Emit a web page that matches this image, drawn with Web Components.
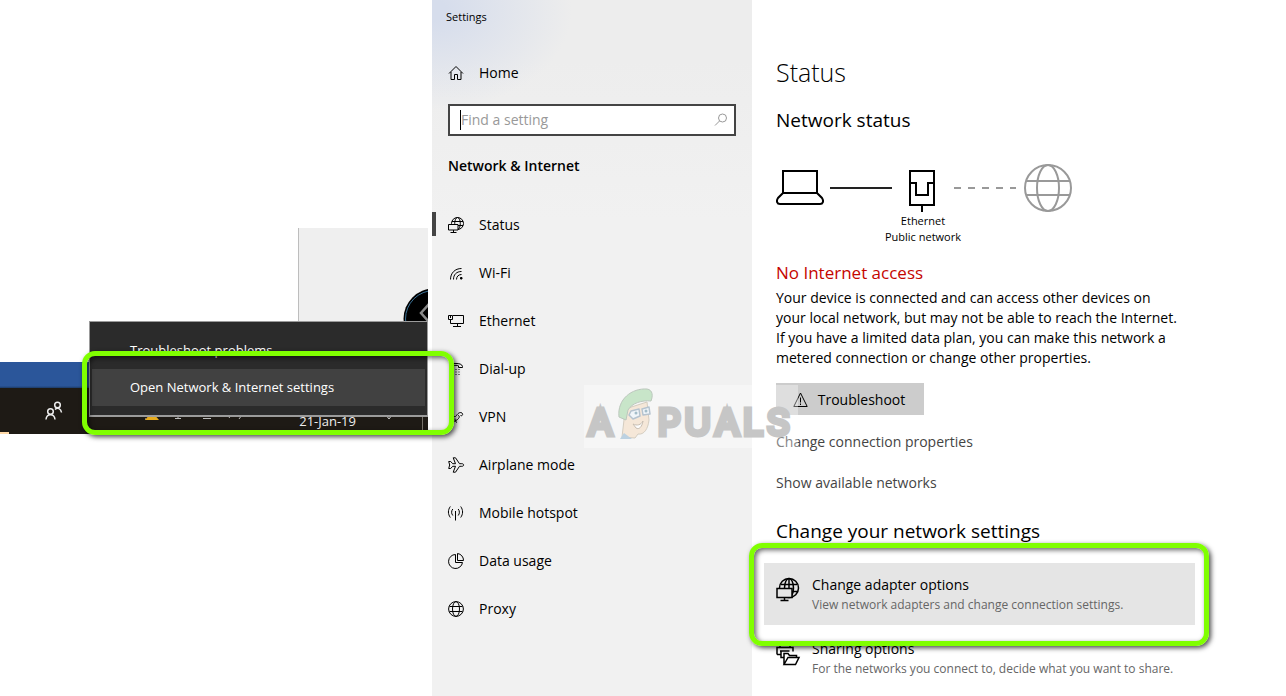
<!DOCTYPE html>
<html lang="en">
<head>
<meta charset="utf-8">
<title>Settings</title>
<style>
  body { margin: 0; background: #fff; color: #000; font-family: "Open Sans", "Noto Sans", sans-serif; font-size: 14px; line-height: 20px; }
</style>
</head>
<body>
<settings-app></settings-app>
<script>
const define = (name, html, setup) => customElements.define(name, class extends HTMLElement {
  constructor() {
    super();
    const t = document.createElement('template');
    t.innerHTML = html;
    this.attachShadow({ mode: 'open' }).append(t.content.cloneNode(true));
  }
  connectedCallback() { if (setup) setup(this, this.shadowRoot); }
});

const ICONS = {
  home: [16, '<path d="M1 8.500 8 1.500l7 7M3 7v7.500h3.500V9.500h3v5H13V7"/>'],
  status: [16, '<circle cx="9.500" cy="6.500" r="6"/><ellipse cx="9.500" cy="6.500" rx="2.800" ry="6"/><path d="M4 4.500h11M4 8.500h11"/><path d="M.5 7.500h9.500v5.500H.5z" fill="#f1f1f1"/><path d="M5.500 13v2.500M2.500 15.500h6"/>'],
  wifi: [16, '<path d="M2.500 14.500C2.500 8 7 3.500 13.500 3.500M5.500 14.500c0-5 3-8 8-8M8.500 14.500c0-3 2-5 5-5"/><path d="M12.500 12.500h1.500v1.500h-1.500z" fill="currentColor"/>'],
  ethernet: [16, '<path d="M5 2.500h10.500v8H3.500M9.500 10.500v3M5 13.500h8M.5 2.500h4v4H.5zM2.500 6.500v4h2M2.500 3v2"/>'],
  dialup: [16, '<path d="M1.500 6.500v-1C2 3 5 2.500 8 2.500s6 .5 6.500 3v1h-4v-1.700C9 4.200 7 4.200 5.500 4.800v1.700z"/><path d="M4 8.500h1m2.500 0h1m2 0h1M4 11h1m2.500 0h1m2 0h1M4 13.500h1m2.500 0h1m2 0h1"/>'],
  vpn: [16, '<path d="M1 5c2-2 3 0 4 1.500s2.500 1.500 3.500 0S11.500 2.500 14 4c1.500 1.500 0 3.500-1.500 2.500M10 6.500c2 0 1.500 2.500-.5 4s-4 2.500-6 1.500c-1.500-1.500 0-3 1.500-2M7 9.500c0 2 .5 3.500 2 4M5 7.500l-2 2"/>'],
  plane: [16, '<path d="M.7 4.500h2l2 2.200h2.800L5.200.8h2.300l4 5.900h2.300c2.500 0 2.500 2.600 0 2.600h-2.300l-4 5.900H5.200l2.300-5.900H4.700l-2 2.200h-2L1.700 8z"/>'],
  hotspot: [16, '<path d="M7.500 6v9.500M4.800 4c-1.600 2-1.600 4.500 0 6.500M2.300 1.500C-.2 5-.2 9 2.300 12.500M10.200 4c1.600 2 1.600 4.500 0 6.500M12.700 1.500c2.500 3.500 2.500 7.500 0 11"/>'],
  usage: [16, '<path d="M7.500 1.500A7 7 0 1 0 14.500 9.500H7.500z"/><path d="M9.500.5v7h6A6.800 6.800 0 0 0 9.500.5z"/>'],
  globe: [16, '<circle cx="8" cy="8" r="7.400"/><ellipse cx="8" cy="8" rx="3.500" ry="7.400"/><path d="M1.500 5.500h13M1.500 10.500h13"/>'],
  search: [14, '<circle cx="8.500" cy="5" r="4"/><path d="M5.500 8 1 12.500"/>'],
  warning: [16, '<path d="M7.500 1 .8 14.500h13.400zM7.500 5.500v5M7.500 11.500v1.500"/>'],
  people: [20, '<g stroke-width="1.500"><circle cx="12.500" cy="4" r="2.800"/><path d="M10 8.500c2.500-2.500 6-1 6.500 3"/><circle cx="5.500" cy="10.500" r="2.800"/><path d="M1 18.500c.5-6.500 8.500-6.500 9 0"/></g>'],
  adapter: [24, '<g stroke-width="1.500"><circle cx="13" cy="10" r="9.500"/><ellipse cx="13" cy="10" rx="4.500" ry="9.500"/><path d="M13 .5v19M5 6.500h16M5 13.500h17"/><path d="M1 10.500h15v9H1z" fill="#e5e5e5"/><path d="M8.500 19.500v3M4.500 22.500h8"/></g>'],
  sharing: [24, '<g stroke-width="1.500"><path d="M4 6V1h10v5M1 12.500V5.500h16v4M1 12.500h4M4 9h9.500M5 9v6.500h2.500M8 22.500V11.500h4l1.500 2h7v2.500M8 22.500l4-7h11l-3.500 7z"/></g>'],
};

define('ui-icon', `<style>
  :host { display: inline-flex; flex: none; }
  svg { display: block; fill: none; stroke: currentColor; stroke-width: 1; overflow: visible; }
</style>`, (el, root) => {
  const [size, body] = ICONS[el.getAttribute('name')];
  const t = document.createElement('template');
  t.innerHTML = `<svg width="${size}" height="${size}" viewBox="0 0 ${size} ${size}" aria-hidden="true">${body}</svg>`;
  root.append(t.content);
});

/* Rounded marker frame drawn over the thing it points out. */
define('highlight-ring', `<style>
  :host { display: block; position: absolute; z-index: 5; box-sizing: border-box; border: 5px solid #80ff00; border-radius: 13px;
    box-shadow: 2px 2px 5px rgba(0,0,0,.7), inset 2px 2px 5px rgba(0,0,0,.6); pointer-events: none; }
</style>`);

define('context-menu', `<style>
  :host { display: block; box-sizing: border-box; background: #2b2b2b; border: solid #9b9b9b; border-width: 1px 1px 2px; padding: 10px 2px 9px; }
</style><div role="menu"><slot></slot></div>`);

define('menu-entry', `<style>
  :host { display: block; }
  button { display: block; width: 100%; height: 37px; border: 0; padding: 0 0 2px 38px; text-align: left; background: none; color: #fff; font: 13px/18px "Open Sans", "Noto Sans", sans-serif; }
  :host([active]) button { background: #414141; }
</style><button role="menuitem"><slot></slot></button>`);

define('desktop-pane', `<style>
  :host { display: block; position: relative; padding: 228px 4px 0 0; }
  .preview { display: flex; justify-content: flex-end; box-sizing: border-box; width: 130px; height: 134px; margin-left: auto; padding-top: 60px; border-left: 1px solid #bdbdbd; background: #efefef; overflow: hidden; }
  .preview svg { flex: none; width: 25px; height: 62px; }
  .strip { height: 26px; background: linear-gradient(#2b569a 92%, #1c3a66); }
  .taskbar { display: flex; align-items: flex-end; justify-content: flex-end; box-sizing: border-box; height: 46px; padding-bottom: 4px; background: #1e1a15; color: #eee; position: relative; }
  .taskbar::before { content: ""; position: absolute; left: 0; bottom: 0; width: 9px; height: 2px; background: #ffd9a8; }
  .people { margin-bottom: 9px; margin-right: 80px; }
  .tray { width: 110px; height: 17px; margin-right: 44px; }
  time { font-size: 13px; line-height: 18px; }
  .down { width: 10px; height: 18px; margin: 0 28px; }
  .edge { width: 1px; height: 42px; background: #77726b; margin-right: 5px; }
  context-menu { position: absolute; right: 4px; top: 321px; width: 339px; }
  highlight-ring { right: -22px; top: 351px; width: 372px; height: 84px; }
</style>
<div class="preview"><svg viewBox="0 0 25 62"><circle cx="31" cy="31" r="30.500" fill="#000"/><circle cx="31" cy="31" r="28.500" fill="none" stroke="#3b7196"/><path d="M26 16 18 25l8 9" fill="none" stroke="#8b8b8b" stroke-width="2.500"/></svg></div>
<div class="strip"></div>
<div class="taskbar">
  <ui-icon class="people" name="people"></ui-icon>
  <svg class="tray" viewBox="0 0 110 17"><path d="M0 5v2M3 5v2" stroke="#ccc"/><path d="M6 0 0 7h14l-6-7z" fill="#e7ab1d"/><path d="M33 0v6M30 5.500h6M58 5.500h8M84 5l2-3M94 6l3-4" stroke="#bbb" fill="none"/></svg>
  <time datetime="2019-01-21">21-Jan-19</time>
  <svg class="down" viewBox="0 0 10 18"><path d="m2 3 3 4 3-4" fill="none" stroke="#ccc"/></svg>
  <span class="edge"></span>
</div>
<context-menu>
  <menu-entry>Troubleshoot problems</menu-entry>
  <menu-entry active>Open Network &amp; Internet settings</menu-entry>
</context-menu>
<highlight-ring></highlight-ring>`);

define('nav-item', `<style>
  :host { display: block; }
  a { display: flex; align-items: center; gap: 15px; height: 48px; padding-left: 16px; color: #000; text-decoration: none; position: relative; }
  :host([current]) a::before { content: ""; position: absolute; left: 0; top: 11px; width: 4px; height: 24px; background: #444; }
</style><a href="#"><span><slot></slot></span></a>`, (el, root) => {
  const icon = document.createElement('ui-icon');
  icon.setAttribute('name', el.getAttribute('icon'));
  root.querySelector('a').prepend(icon);
});

define('search-box', `<style>
  :host { display: flex; align-items: center; box-sizing: border-box; height: 32px; border: 2px solid #444; background: #fff; padding: 0 6px 0 10px; color: #999; }
  .caret { width: 1px; height: 20px; background: #000; }
  input { flex: 1; min-width: 0; border: 0; outline: 0; padding: 0; background: none; font: 14px/20px "Open Sans", "Noto Sans", sans-serif; }
  input::placeholder { color: #999; opacity: 1; }
</style><span class="caret"></span><input type="text" placeholder="Find a setting" aria-label="Find a setting"><ui-icon name="search"></ui-icon>`);

define('settings-sidebar', `<style>
  :host { display: block; background: radial-gradient(ellipse 140px 100px at 0 10px, #d6ddec 10%, rgba(214,221,236,0)), linear-gradient(#ededed 60px, #f1f1f1 220px); }
  header { padding: 8px 14px; font-size: 11px; line-height: 18px; }
  .home { margin-top: 15px; }
  search-box { margin: 7px 16px 0; }
  h2 { margin: 16px 16px 21px; font-size: 14px; line-height: 28px; font-weight: 600; }
</style>
<header>Settings</header>
<nav-item class="home" icon="home">Home</nav-item>
<search-box></search-box>
<h2>Network &amp; Internet</h2>
<nav>
  <nav-item icon="status" current>Status</nav-item>
  <nav-item icon="wifi">Wi-Fi</nav-item>
  <nav-item icon="ethernet">Ethernet</nav-item>
  <nav-item icon="dialup">Dial-up</nav-item>
  <nav-item icon="vpn">VPN</nav-item>
  <nav-item icon="plane">Airplane mode</nav-item>
  <nav-item icon="hotspot">Mobile hotspot</nav-item>
  <nav-item icon="usage">Data usage</nav-item>
  <nav-item icon="globe">Proxy</nav-item>
</nav>`);

define('network-map', `<style>
  :host { display: block; width: 296px; }
  .row { display: flex; align-items: center; height: 48px; }
  svg { flex: none; fill: none; stroke: #000; stroke-width: 2; }
  .line { width: 62px; height: 2px; margin-left: 6px; background: #222; }
  .dash { width: 62px; height: 2px; margin-right: 8px; background: repeating-linear-gradient(90deg, #999 0 7px, transparent 7px 14px); }
  p { margin: 1px 2px 0 0; text-align: center; font-size: 11px; line-height: 16px; }
</style>
<div class="row">
  <svg width="48" height="48"><path d="M7 7h34v22H7zM7 29l-5 5c-2 3-1 6 2 6h40c3 0 4-3 2-6l-5-5"/></svg>
  <span class="line"></span>
  <svg width="62" height="48"><path d="M18 7h24v34H18zM18 19h6v12h12V19h6M30 41v7"/></svg>
  <span class="dash"></span>
  <svg width="48" height="48" style="stroke:#999"><circle cx="24" cy="24" r="23"/><ellipse cx="24" cy="24" rx="11" ry="23"/><path d="M2 17h44M2 31h44"/></svg>
</div>
<p><slot></slot></p>`);

define('option-row', `<style>
  :host { display: block; position: relative; margin: 0 -12px 2px; }
  a { display: flex; gap: 12px; height: 38px; padding: 12px; color: #000; text-decoration: none; }
  :host([hovered]) a { background: #e5e5e5; }
  .icon { margin-top: 3px; }
  .text { white-space: nowrap; }
  .hint { display: block; font-size: 12px; line-height: 20px; color: #666; }
</style><a href="#"><span class="icon"></span><span class="text"><slot></slot><span class="hint"></span></span></a><slot name="marker"></slot>`, (el, root) => {
  const icon = document.createElement('ui-icon');
  icon.setAttribute('name', el.getAttribute('icon'));
  root.querySelector('.icon').replaceChildren(icon);
  root.querySelector('.hint').textContent = el.getAttribute('hint');
});

define('status-page', `<style>
  :host { display: block; padding: 56px 24px 5px; }
  .column { max-width: 407px; }
  h1, h2, h3, p { margin: 0; font-weight: 400; }
  h1 { font-size: 25px; line-height: 32px; font-weight: 300; }
  h2 { font-size: 19px; line-height: 28px; }
  .first { margin: 18px 0 30px; }
  h3 { margin: 16px 0 3px; font-size: 17px; line-height: 24px; color: #c50500; }
  button { display: flex; align-items: center; justify-content: center; gap: 9px; width: 148px; height: 32px; margin: 15px 0 17px; padding: 1px 6px 0 4px; border: 0; background: #ccc; color: #000; font: 14px/20px "Open Sans", "Noto Sans", sans-serif; }
  .link { display: block; width: max-content; margin-bottom: 21px; color: #444; text-decoration: none; }
  .settings { margin: 24px 0 18px; }
  highlight-ring { inset: -20px -14px -21px -15px; }
</style>
<div class="column">
  <h1>Status</h1>
  <h2 class="first">Network status</h2>
  <network-map>Ethernet<br>Public network</network-map>
  <h3>No Internet access</h3>
  <p>Your device is connected and can access other devices on<br>your local network, but may not be able to reach the Internet.<br>If you have a limited data plan, you can make this network a<br>metered connection or change other properties.</p>
  <button><ui-icon name="warning"></ui-icon>Troubleshoot</button>
  <a class="link" href="#">Change connection properties</a>
  <a class="link" href="#">Show available networks</a>
  <h2 class="settings">Change your network settings</h2>
  <option-row icon="adapter" hovered hint="View network adapters and change connection settings.">Change adapter options<highlight-ring slot="marker"></highlight-ring></option-row>
  <option-row icon="sharing" hint="For the networks you connect to, decide what you want to share.">Sharing options</option-row>
</div>`);

/* Translucent site badge laid over the sidebar edge. */
define('brand-watermark', `<style>
  :host { display: flex; align-items: flex-start; justify-content: space-between; box-sizing: border-box; width: 214px; height: 63px; padding: 0 8px 0 4px; background: rgba(255,255,255,.35); color: #c6c6c6; font: 400 36px/30px Inter, sans-serif; -webkit-text-stroke: 5px #c6c6c6; stroke-linejoin: round; pointer-events: none; }
  span { margin-top: 22px; }
  svg { display: block; width: 38px; height: 56px; opacity: .75; }
</style><span>A</span>
<svg viewBox="0 0 38 56"><path d="M6 52l2-17-2-10 25-8 2 18c-1 9-5 15-11 14l-3 4z" fill="#f5e3cf" stroke="#c9bfae"/><path d="M3 32C1 14 16 3 31 4c6 1 6 7 4 12-9-1-19 2-23 9l-2 10z" fill="#b9e0bb" stroke="#a9b8aa"/><path d="M15 26l8-2 1 7-7 3-4-4zM26 24l7-2 1 7-7 1z" fill="#eef5fb" stroke="#a0b3c3" stroke-width="1.500"/><circle cx="20" cy="28" r="1.500" fill="#8ab"/><circle cx="30" cy="26" r="1.500" fill="#8ab"/><path d="M17 39c4 2 8 1 10-3-1 6-4 9-7 7z" fill="#fff" stroke="#b9ab9b"/><path d="M4 54l4-6 8 6" fill="#a9c5da"/></svg>
<span>P</span><span>U</span><span>A</span><span>L</span><span>S</span>`);

define('settings-app', `<style>
  :host { display: grid; grid-template-columns: minmax(0, 72fr) 320px minmax(0, 89fr); min-height: 100vh; overflow: hidden; }
  desktop-pane { z-index: 2; }
  status-page { z-index: 1; }
  .middle { position: relative; display: grid; }
  brand-watermark { position: absolute; z-index: 3; left: 152px; top: 385px; }
</style>
<desktop-pane></desktop-pane>
<div class="middle"><settings-sidebar></settings-sidebar><brand-watermark></brand-watermark></div>
<status-page></status-page>`);
</script>
</body>
</html>
